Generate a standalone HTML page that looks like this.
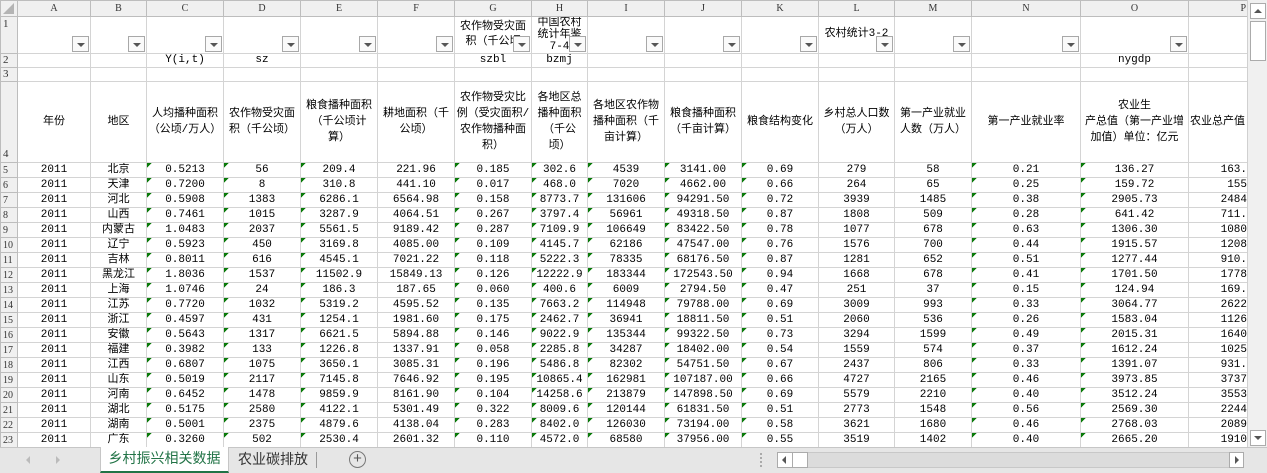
<!DOCTYPE html>
<html><head><meta charset="utf-8">
<style>
*{margin:0;padding:0;box-sizing:border-box}
body{width:1267px;height:473px;overflow:hidden;background:#fff;font-family:"Liberation Mono","Noto Sans CJK SC",monospace;font-size:11px;color:#000;position:relative}
#wrap{position:absolute;left:0;top:0;width:1247px;height:447px;overflow:hidden}
table{border-collapse:collapse;table-layout:fixed;width:1247px}
td{border:1px solid #d4d4d4;text-align:center;vertical-align:middle;white-space:nowrap;overflow:hidden;padding:0 1px;line-height:13px;position:relative}
tr.h td{background:#f0f0f0;border-color:#bdbdbd;font-size:10px;color:#333;height:16px;font-family:"Liberation Serif",serif}
td.rh{background:#f0f0f0;border-color:#bdbdbd;font-size:10px;color:#333;text-align:left;vertical-align:bottom;padding-left:2px;font-family:"Liberation Serif",serif}
tr.r1 td{height:37px;vertical-align:top;white-space:normal;line-height:15px;font-size:11px}
tr.r2 td,tr.r3 td{height:14px;font-size:11px}
tr.r4 td{height:81px;white-space:normal;line-height:16px;font-size:11px}
tr.d{height:15px}
tr.d td{height:15px;padding-top:1px;line-height:13px;vertical-align:bottom}
tr.d td.rh{padding-top:0}
tr.d td:nth-child(4),tr.d td:nth-child(5),tr.d td:nth-child(6),tr.d td:nth-child(8),tr.d td:nth-child(9),tr.d td:nth-child(10),tr.d td:nth-child(11),tr.d td:nth-child(12),tr.d td:nth-child(15),tr.d td:nth-child(16){background:linear-gradient(135deg,#0a7a0a 3.5px,transparent 3.5px) no-repeat}
tr.d td:nth-child(17){text-align:right;padding-right:0}
.fb{position:absolute;right:1px;bottom:1px;width:17px;height:16px;border:1px solid #a8a8a8;background:#fafafa}
.fb:after{content:"";position:absolute;left:4px;top:6px;border-left:4px solid transparent;border-right:4px solid transparent;border-top:4px solid #555}
.tl{position:absolute;left:2px;top:2px;width:0;height:0;border-left:11px solid transparent;border-bottom:11px solid #b4b4b4}
#vs{position:absolute;left:1247px;top:0;width:20px;height:447px;background:#f0f0f0;border-left:1px solid #d0d0d0}
#tabs{position:absolute;left:0;top:447px;width:1267px;height:26px;background:#e6e6e6;border-top:1px solid #c6c6c6;font-family:"Liberation Sans","Noto Sans CJK SC",sans-serif}
</style></head><body>
<div id="wrap">
<table>
<colgroup><col style="width:17px"><col style="width:73px"><col style="width:56px"><col style="width:77px"><col style="width:77px"><col style="width:77px"><col style="width:77px"><col style="width:77px"><col style="width:56px"><col style="width:77px"><col style="width:77px"><col style="width:77px"><col style="width:76px"><col style="width:77px"><col style="width:109px"><col style="width:108px"><col style="width:59px"></colgroup>
<tr class="h"><td><span class="tl"></span></td><td>A</td><td>B</td><td>C</td><td>D</td><td>E</td><td>F</td><td>G</td><td>H</td><td>I</td><td>J</td><td>K</td><td>L</td><td>M</td><td>N</td><td>O</td><td style="text-align:right">P</td></tr>
<tr class="r1"><td class="rh">1</td><td><span class="fb"></span></td><td><span class="fb"></span></td><td><span class="fb"></span></td><td><span class="fb"></span></td><td><span class="fb"></span></td><td><span class="fb"></span></td><td style="padding-top:3px">农作物受灾面积（千公顷<span class="fb"></span></td><td style="padding-top:0;line-height:12px">中国农村统计年鉴7-4<span class="fb"></span></td><td><span class="fb"></span></td><td><span class="fb"></span></td><td><span class="fb"></span></td><td style="padding-top:10px">农村统计3-2<span class="fb"></span></td><td><span class="fb"></span></td><td><span class="fb"></span></td><td><span class="fb"></span></td><td></td></tr>
<tr class="r2"><td class="rh">2</td><td></td><td></td><td>Y(i,t)</td><td>sz</td><td></td><td></td><td>szbl</td><td>bzmj</td><td></td><td></td><td></td><td></td><td></td><td></td><td>nygdp</td><td></td></tr>
<tr class="r3"><td class="rh">3</td><td></td><td></td><td></td><td></td><td></td><td></td><td></td><td></td><td></td><td></td><td></td><td></td><td></td><td></td><td></td><td></td></tr>
<tr class="r4"><td class="rh">4</td><td>年份</td><td>地区</td><td>人均播种面积（公顷/万人）</td><td>农作物受灾面积（千公顷）</td><td>粮食播种面积<br>（千公顷计<br>算）</td><td>耕地面积（千公顷）</td><td>农作物受灾比例（受灾面积/农作物播种面积）</td><td>各地区总播种面积<br>（千公<br>顷）</td><td>各地区农作物播种面积（千亩计算）</td><td>粮食播种面积（千亩计算）</td><td>粮食结构变化</td><td>乡村总人口数（万人）</td><td>第一产业就业人数（万人）</td><td>第一产业就业率</td><td>农业生<br>产总值（第一产业增加值）单位：亿元</td><td style="text-align:left;white-space:nowrap">农业总产值</td></tr>
<tr class="d"><td class="rh">5</td><td>2011</td><td>北京</td><td>0.5213</td><td>56</td><td>209.4</td><td>221.96</td><td>0.185</td><td>302.6</td><td>4539</td><td>3141.00</td><td>0.69</td><td>279</td><td>58</td><td>0.21</td><td>136.27</td><td>163.</td></tr>
<tr class="d"><td class="rh">6</td><td>2011</td><td>天津</td><td>0.7200</td><td>8</td><td>310.8</td><td>441.10</td><td>0.017</td><td>468.0</td><td>7020</td><td>4662.00</td><td>0.66</td><td>264</td><td>65</td><td>0.25</td><td>159.72</td><td>155</td></tr>
<tr class="d"><td class="rh">7</td><td>2011</td><td>河北</td><td>0.5908</td><td>1383</td><td>6286.1</td><td>6564.98</td><td>0.158</td><td>8773.7</td><td>131606</td><td>94291.50</td><td>0.72</td><td>3939</td><td>1485</td><td>0.38</td><td>2905.73</td><td>2484</td></tr>
<tr class="d"><td class="rh">8</td><td>2011</td><td>山西</td><td>0.7461</td><td>1015</td><td>3287.9</td><td>4064.51</td><td>0.267</td><td>3797.4</td><td>56961</td><td>49318.50</td><td>0.87</td><td>1808</td><td>509</td><td>0.28</td><td>641.42</td><td>711.</td></tr>
<tr class="d"><td class="rh">9</td><td>2011</td><td>内蒙古</td><td>1.0483</td><td>2037</td><td>5561.5</td><td>9189.42</td><td>0.287</td><td>7109.9</td><td>106649</td><td>83422.50</td><td>0.78</td><td>1077</td><td>678</td><td>0.63</td><td>1306.30</td><td>1080</td></tr>
<tr class="d"><td class="rh">10</td><td>2011</td><td>辽宁</td><td>0.5923</td><td>450</td><td>3169.8</td><td>4085.00</td><td>0.109</td><td>4145.7</td><td>62186</td><td>47547.00</td><td>0.76</td><td>1576</td><td>700</td><td>0.44</td><td>1915.57</td><td>1208</td></tr>
<tr class="d"><td class="rh">11</td><td>2011</td><td>吉林</td><td>0.8011</td><td>616</td><td>4545.1</td><td>7021.22</td><td>0.118</td><td>5222.3</td><td>78335</td><td>68176.50</td><td>0.87</td><td>1281</td><td>652</td><td>0.51</td><td>1277.44</td><td>910.</td></tr>
<tr class="d"><td class="rh">12</td><td>2011</td><td>黑龙江</td><td>1.8036</td><td>1537</td><td>11502.9</td><td>15849.13</td><td>0.126</td><td>12222.9</td><td>183344</td><td>172543.50</td><td>0.94</td><td>1668</td><td>678</td><td>0.41</td><td>1701.50</td><td>1778</td></tr>
<tr class="d"><td class="rh">13</td><td>2011</td><td>上海</td><td>1.0746</td><td>24</td><td>186.3</td><td>187.65</td><td>0.060</td><td>400.6</td><td>6009</td><td>2794.50</td><td>0.47</td><td>251</td><td>37</td><td>0.15</td><td>124.94</td><td>169.</td></tr>
<tr class="d"><td class="rh">14</td><td>2011</td><td>江苏</td><td>0.7720</td><td>1032</td><td>5319.2</td><td>4595.52</td><td>0.135</td><td>7663.2</td><td>114948</td><td>79788.00</td><td>0.69</td><td>3009</td><td>993</td><td>0.33</td><td>3064.77</td><td>2622</td></tr>
<tr class="d"><td class="rh">15</td><td>2011</td><td>浙江</td><td>0.4597</td><td>431</td><td>1254.1</td><td>1981.60</td><td>0.175</td><td>2462.7</td><td>36941</td><td>18811.50</td><td>0.51</td><td>2060</td><td>536</td><td>0.26</td><td>1583.04</td><td>1126</td></tr>
<tr class="d"><td class="rh">16</td><td>2011</td><td>安徽</td><td>0.5643</td><td>1317</td><td>6621.5</td><td>5894.88</td><td>0.146</td><td>9022.9</td><td>135344</td><td>99322.50</td><td>0.73</td><td>3294</td><td>1599</td><td>0.49</td><td>2015.31</td><td>1640</td></tr>
<tr class="d"><td class="rh">17</td><td>2011</td><td>福建</td><td>0.3982</td><td>133</td><td>1226.8</td><td>1337.91</td><td>0.058</td><td>2285.8</td><td>34287</td><td>18402.00</td><td>0.54</td><td>1559</td><td>574</td><td>0.37</td><td>1612.24</td><td>1025</td></tr>
<tr class="d"><td class="rh">18</td><td>2011</td><td>江西</td><td>0.6807</td><td>1075</td><td>3650.1</td><td>3085.31</td><td>0.196</td><td>5486.8</td><td>82302</td><td>54751.50</td><td>0.67</td><td>2437</td><td>806</td><td>0.33</td><td>1391.07</td><td>931.</td></tr>
<tr class="d"><td class="rh">19</td><td>2011</td><td>山东</td><td>0.5019</td><td>2117</td><td>7145.8</td><td>7646.92</td><td>0.195</td><td>10865.4</td><td>162981</td><td>107187.00</td><td>0.66</td><td>4727</td><td>2165</td><td>0.46</td><td>3973.85</td><td>3737</td></tr>
<tr class="d"><td class="rh">20</td><td>2011</td><td>河南</td><td>0.6452</td><td>1478</td><td>9859.9</td><td>8161.90</td><td>0.104</td><td>14258.6</td><td>213879</td><td>147898.50</td><td>0.69</td><td>5579</td><td>2210</td><td>0.40</td><td>3512.24</td><td>3553</td></tr>
<tr class="d"><td class="rh">21</td><td>2011</td><td>湖北</td><td>0.5175</td><td>2580</td><td>4122.1</td><td>5301.49</td><td>0.322</td><td>8009.6</td><td>120144</td><td>61831.50</td><td>0.51</td><td>2773</td><td>1548</td><td>0.56</td><td>2569.30</td><td>2244</td></tr>
<tr class="d"><td class="rh">22</td><td>2011</td><td>湖南</td><td>0.5001</td><td>2375</td><td>4879.6</td><td>4138.04</td><td>0.283</td><td>8402.0</td><td>126030</td><td>73194.00</td><td>0.58</td><td>3621</td><td>1680</td><td>0.46</td><td>2768.03</td><td>2089</td></tr>
<tr class="d"><td class="rh">23</td><td>2011</td><td>广东</td><td>0.3260</td><td>502</td><td>2530.4</td><td>2601.32</td><td>0.110</td><td>4572.0</td><td>68580</td><td>37956.00</td><td>0.55</td><td>3519</td><td>1402</td><td>0.40</td><td>2665.20</td><td>1910</td></tr>
</table>
</div>
<div id="vs">
<div style="position:absolute;left:2px;top:3px;width:16px;height:16px;border:1px solid #ababab;background:#fff"><div style="position:absolute;left:3px;top:5px;border-left:4px solid transparent;border-right:4px solid transparent;border-bottom:4px solid #555"></div></div>
<div style="position:absolute;left:2px;top:21px;width:16px;height:40px;border:1px solid #ababab;background:#fff"></div>
<div style="position:absolute;left:2px;top:430px;width:16px;height:16px;border:1px solid #ababab;background:#fff"><div style="position:absolute;left:3px;top:5px;border-left:4px solid transparent;border-right:4px solid transparent;border-top:4px solid #555"></div></div>
</div>
<div id="tabs">
<div style="position:absolute;left:26px;top:8px;border-top:4px solid transparent;border-bottom:4px solid transparent;border-right:4px solid #bbb"></div>
<div style="position:absolute;left:56px;top:8px;border-top:4px solid transparent;border-bottom:4px solid transparent;border-left:4px solid #bbb"></div>
<div style="position:absolute;left:100px;top:-1px;width:129px;height:26px;background:#fff;border-left:1px solid #c6c6c6;border-right:1px solid #c6c6c6;border-bottom:2px solid #217346;color:#217346;font-size:14px;text-align:center;line-height:22px">乡村振兴相关数据</div>
<div style="position:absolute;left:229px;top:0;width:88px;height:24px;color:#333;font-size:14px;text-align:center;line-height:22px">农业碳排放</div>
<div style="position:absolute;left:316px;top:4px;width:1px;height:16px;background:#999"></div>
<div style="position:absolute;left:349px;top:3px;width:17px;height:17px;border:1px solid #777;border-radius:50%;color:#555;text-align:center;line-height:14px;font-size:15px">+</div>
<div style="position:absolute;left:760px;top:5px;width:2px;height:14px;background:repeating-linear-gradient(#aaa 0 2px,transparent 2px 4px)"></div>
<div style="position:absolute;left:777px;top:4px;width:467px;height:16px;background:#dcdcdc;border:1px solid #c8c8c8"></div>
<div style="position:absolute;left:777px;top:4px;width:16px;height:16px;background:#fff;border:1px solid #ababab"><div style="position:absolute;left:4px;top:3px;border-top:4px solid transparent;border-bottom:4px solid transparent;border-right:4px solid #555"></div></div>
<div style="position:absolute;left:792px;top:4px;width:16px;height:16px;background:#fff;border:1px solid #ababab"></div>
<div style="position:absolute;left:1229px;top:4px;width:15px;height:16px;background:#fff;border:1px solid #ababab"><div style="position:absolute;left:5px;top:3px;border-top:4px solid transparent;border-bottom:4px solid transparent;border-left:4px solid #555"></div></div>
</div>
</body></html>
